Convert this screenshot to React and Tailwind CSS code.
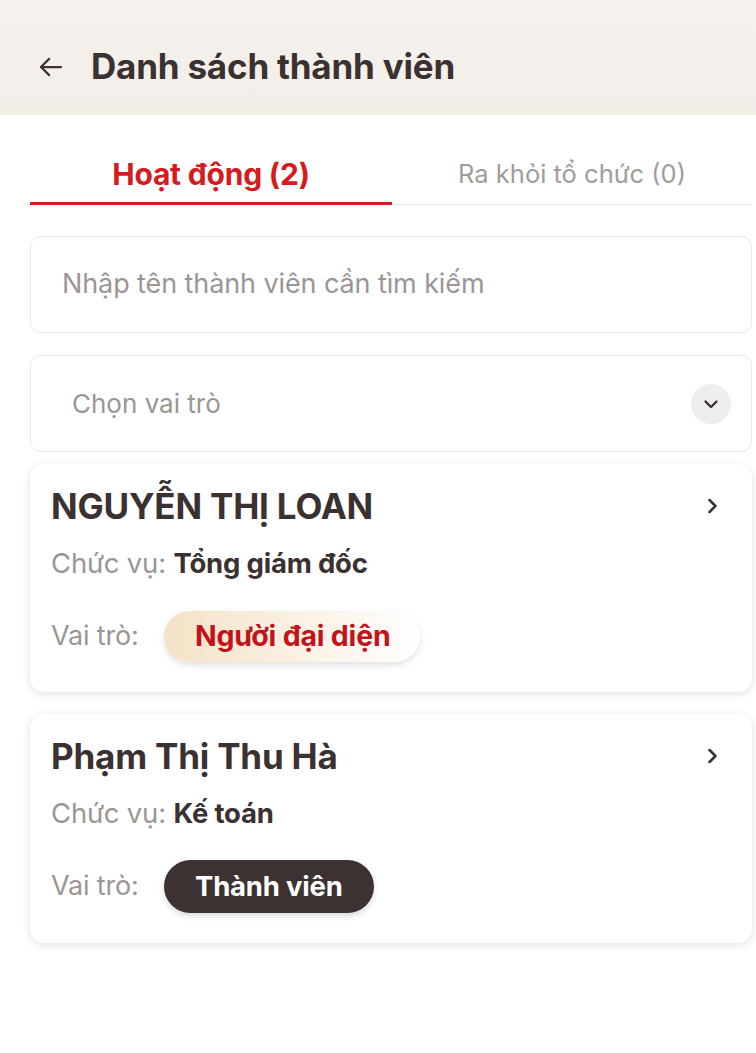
import React from "react";

const members = [
  { name: "NGUYỄN THỊ LOAN", position: "Tổng giám đốc", role: "Người đại diện", rep: true },
  { name: "Phạm Thị Thu Hà", position: "Kế toán", role: "Thành viên", rep: false },
];

function ArrowLeftIcon() {
  return (
    <svg width="30" height="30" viewBox="0 0 24 24" fill="none" stroke="#3b3333" strokeWidth="1.8" strokeLinecap="round" strokeLinejoin="round">
      <path d="M20 12H4" />
      <path d="M10.5 5.5L4 12l6.5 6.5" />
    </svg>
  );
}

function ChevronRight() {
  return (
    <svg width="20" height="20" viewBox="0 0 20 20" fill="none" stroke="#3b3333" strokeWidth="2.5" strokeLinecap="round" strokeLinejoin="round">
      <path d="M7.5 4L13.5 10l-6 6" />
    </svg>
  );
}

function ChevronDown() {
  return (
    <svg width="20" height="20" viewBox="0 0 20 20" fill="none" stroke="#3b3333" strokeWidth="2.4" strokeLinecap="round" strokeLinejoin="round">
      <path d="M4.5 7.5L10 13l5.5-5.5" />
    </svg>
  );
}

function MemberCard({ m }) {
  return (
    <div className="bg-white rounded-[14px] shadow-[0_2px_8px_rgba(0,0,0,0.12)] pl-[21px] pr-[30px] pt-[22px] pb-[30px]">
      <div className="flex items-center justify-between">
        <div className="text-[35px] leading-[40px] font-bold text-[#3b3131] tracking-[-0.2px]">{m.name}</div>
        <ChevronRight />
      </div>
      <div className="mt-[20px] text-[27.5px] leading-[34px] tracking-[-0.2px]">
        <span className="text-[#9b9595]">Chức vụ: </span>
        <span className="font-bold text-[#3b3131]">{m.position}</span>
      </div>
      <div className={`flex items-center ${m.rep ? "mt-[31px]" : "mt-[30px]"}`}>
        <span className="text-[27px] text-[#9b9595] w-[113px] tracking-[-0.2px]">Vai trò:</span>
        {m.rep ? (
          <span className="h-[51px] pl-[31px] pr-[30px] flex items-center rounded-full bg-gradient-to-r from-[#f3e2c6] to-[#ffffff] shadow-[0_3px_6px_rgba(0,0,0,0.12)] text-[28.5px] font-bold text-[#c4121a] tracking-[-0.2px]">
            {m.role}
          </span>
        ) : (
          <span className="h-[53px] pl-[31px] pr-[31px] flex items-center rounded-full bg-[#3d3232] shadow-[0_3px_6px_rgba(0,0,0,0.15)] text-[27.5px] font-bold text-white tracking-[-0.2px]">
            {m.role}
          </span>
        )}
      </div>
    </div>
  );
}

export default function App() {
  return (
    <div className="min-h-[1053px] bg-white font-[Inter,Roboto,sans-serif]">
      <div className="h-[115px] bg-gradient-to-b from-[#f5f1ec] to-[#f3eee8] flex items-center pl-[36px] pt-[18px]">
        <ArrowLeftIcon />
        <h1 className="ml-[25px] text-[35px] font-bold text-[#3b3131] tracking-[-0.2px]">Danh sách thành viên</h1>
      </div>

      <div className="pl-[30px] pr-[4px]">
        <div className="flex mt-[36px]">
          <div className="w-[362px] h-[54px] flex items-start justify-center pt-[3px] border-b-[3px] border-[#d71920]">
            <span className="text-[30px] font-bold text-[#d71920] leading-[40px] tracking-[-0.2px]">Hoạt động (2)</span>
          </div>
          <div className="flex-1 h-[54px] flex items-start justify-center pt-[3px] border-b border-[#e6e3e3]">
            <span className="text-[25.5px] text-[#a19c9c] leading-[40px]">Ra khỏi tổ chức (0)</span>
          </div>
        </div>

        <div className="mt-[31px] h-[97px] border border-[#ebe9e9] rounded-[10px] flex items-center pl-[31px]">
          <span className="text-[27px] text-[#9b9595] tracking-[-0.1px]">Nhập tên thành viên cần tìm kiếm</span>
        </div>

        <div className="mt-[22px] h-[97px] border border-[#ebe9e9] rounded-[10px] flex items-center justify-between pl-[41px] pr-[20px]">
          <span className="text-[26px] text-[#9b9595]">Chọn vai trò</span>
          <span className="w-[40px] h-[40px] rounded-full bg-[#efeded] flex items-center justify-center">
            <ChevronDown />
          </span>
        </div>

        <div className="mt-[12px] flex flex-col gap-[22px]">
          {members.map((m) => (
            <MemberCard key={m.name} m={m} />
          ))}
        </div>
      </div>
    </div>
  );
}
